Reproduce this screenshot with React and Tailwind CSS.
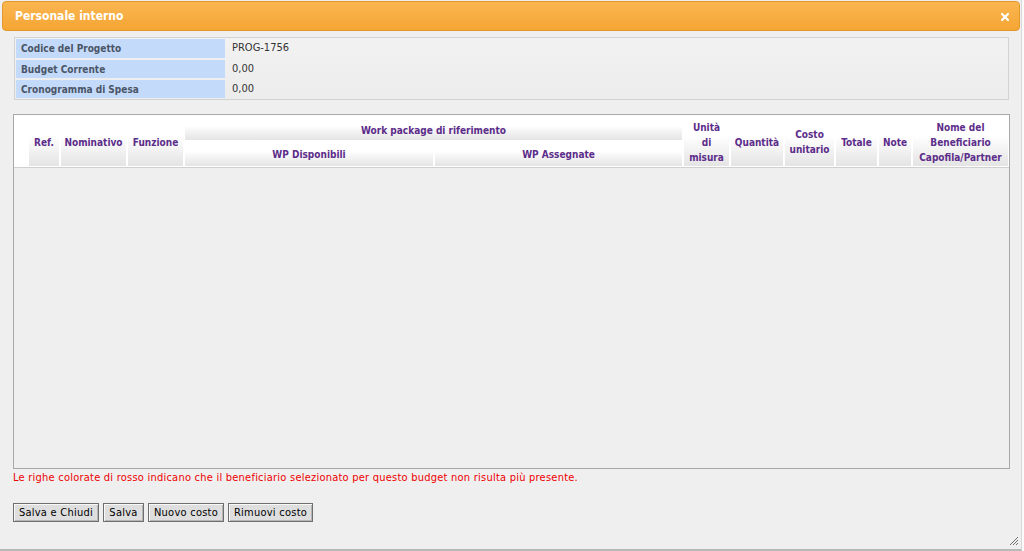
import React from "react";

const F = { fontFamily: '"DejaVu Sans Condensed", "DejaVu Sans", Verdana, sans-serif' };

function H({ children, className = "" }) {
  return (
    <div className={"flex items-center justify-center text-center bg-gradient-to-b from-white from-40% to-[#e4e4e4] text-[#5c2d8a] font-bold text-[10px] leading-[15px] " + className}>
      {children}
    </div>
  );
}

function Btn({ children, w }) {
  return (
    <button className={"h-[19px] border border-[#6e6e6e] bg-[#dedede] shadow-[inset_1px_1px_0_#f8f8f8,inset_-1px_-1px_0_#b5b5b5] text-[11px] leading-[15px] tracking-[0.25px] text-black flex items-center justify-center " + w} style={F}>
      {children}
    </button>
  );
}

export default function App() {
  return (
    <div className="w-[1024px] h-[551px] bg-[#fafafa] overflow-hidden" style={F}>
      <div className="h-[551px] w-[1022px] bg-[#efefef] border-r border-b-2 border-r-[#d8d8d8] border-b-[#b8b8b8] flex flex-col relative">
        {/* title bar */}
        <div className="mt-[1px] ml-[2px] mr-[1px] h-[30px] rounded-[4px] border border-[#e3982c] bg-gradient-to-b from-[#fab650] to-[#f5a533] flex items-center justify-between pl-[12px] pr-[10px]">
          <span className="text-white font-bold text-[12px] leading-[14px]">Personale interno</span>
          <svg width="8" height="8" viewBox="0 0 8 8" className="mt-[1px]">
            <path d="M1 1 L7 7 M7 1 L1 7" stroke="#fff" strokeWidth="2.2" strokeLinecap="square" />
          </svg>
        </div>

        {/* info table */}
        <div className="mt-[6px] ml-[14px] w-[995px] border border-[#d3d3d3] bg-gradient-to-b from-[#f2f2f2] to-[#ececec] p-[1px] grid grid-cols-[209px_1fr] gap-y-[2px]">
          <div className="h-[19px] bg-[#c4dafa] text-[10px] font-bold text-[#4a5566] flex items-center pl-[5px]">Codice del Progetto</div>
          <div className="h-[19px] text-[11px] text-[#333] flex items-center pl-[7px]">PROG-1756</div>
          <div className="h-[18px] bg-[#c4dafa] text-[10px] font-bold text-[#4a5566] flex items-center pl-[5px]">Budget Corrente</div>
          <div className="h-[18px] text-[11px] text-[#333] flex items-center pl-[7px]">0,00</div>
          <div className="h-[18px] bg-[#c4dafa] text-[10px] font-bold text-[#4a5566] flex items-center pl-[5px]">Cronogramma di Spesa</div>
          <div className="h-[18px] text-[11px] text-[#333] flex items-center pl-[7px]">0,00</div>
        </div>

        {/* main table */}
        <div className="mt-[14px] ml-[13px] w-[997px] h-[355px] border border-[#a8a8a8] flex flex-col">
          <div className="bg-white p-[1px] border-b border-[#d0d0d0]">
            <div className="grid grid-cols-[12px_30px_65px_55px_248px_247px_45px_52px_49px_41px_32px_1fr] grid-rows-[24px_25px] gap-x-[2px] gap-y-[1px]">
              <H className="row-span-2 bg-gradient-to-r from-[#e8e8e8] to-white"></H>
              <H className="row-span-2 pt-[2px]">Ref.</H>
              <H className="row-span-2 pt-[2px]">Nominativo</H>
              <H className="row-span-2 pt-[2px]">Funzione</H>
              <H className="col-span-2 pt-[4px]">Work package di riferimento</H>
              <H className="row-span-2 pt-[2px]">Unità<br />di<br />misura</H>
              <H className="row-span-2 pt-[2px]">Quantità</H>
              <H className="row-span-2 pt-[2px]">Costo<br />unitario</H>
              <H className="row-span-2 pt-[2px]">Totale</H>
              <H className="row-span-2 pt-[2px]">Note</H>
              <H className="row-span-2 pt-[2px]">Nome del<br />Beneficiario<br />Capofila/Partner</H>
              <H className="pt-[2px]">WP Disponibili</H>
              <H className="pt-[2px]">WP Assegnate</H>
            </div>
          </div>
          <div className="flex-1 bg-[#efefef]"></div>
        </div>

        <div className="mt-[2px] ml-[13px] text-[11px] leading-[14px] tracking-[0.23px] text-[#ee0000]">
          Le righe colorate di rosso indicano che il beneficiario selezionato per questo budget non risulta più presente.
        </div>

        <div className="mt-[18px] ml-[13px] flex gap-[4px]">
          <Btn w="w-[86px]">Salva e Chiudi</Btn>
          <Btn w="w-[41px]">Salva</Btn>
          <Btn w="w-[76px]">Nuovo costo</Btn>
          <Btn w="w-[85px]">Rimuovi costo</Btn>
        </div>

        <svg width="11" height="11" viewBox="0 0 11 11" className="absolute right-[2px] bottom-[3px]">
          <path d="M10 2 L2 10 M10 5 L5 10 M10 8 L8 10" stroke="#707070" strokeWidth="1" />
        </svg>
      </div>
    </div>
  );
}
